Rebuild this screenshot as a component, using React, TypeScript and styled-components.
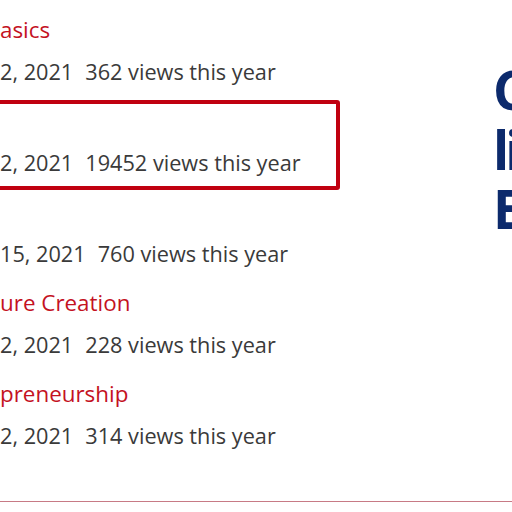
import React from "react";
import styled, { createGlobalStyle } from "styled-components";

const Global = createGlobalStyle`
  html, body { margin: 0; padding: 0; background: #ffffff; }
  body { width: 512px; height: 512px; overflow: hidden; font-family: "Open Sans", "Noto Sans", sans-serif; }
`;

const Page = styled.div`
  width: 512px;
  height: 512px;
  overflow: hidden;
  display: flex;
  flex-direction: column;
`;

const Main = styled.div`
  display: flex;
  align-items: flex-start;
  padding-top: 9px;
`;

const List = styled.ul`
  list-style: none;
  margin: 0 0 0 -24px;
  padding: 0;
  width: 364px;
  flex: none;
  display: flex;
  flex-direction: column;
  gap: 1px;
`;

const Item = styled.li<{ $active?: boolean }>`
  height: 90px;
  box-sizing: border-box;
  border: 4px solid ${(p) => (p.$active ? "#c00010" : "transparent")};
  border-radius: 3px;
  padding-left: 20px;
  white-space: nowrap;
`;

const Title = styled.div`
  height: 34px;
  line-height: 34px;
  font-size: 22.4px;
  color: #c4121f;
`;

const Meta = styled.div`
  height: 48px;
  line-height: 50px;
  font-size: 21.7px;
  color: #3a3a3a;
`;

const Views = styled.span`
  margin-left: 12px;
`;

const Heading = styled.h1`
  margin: 51px 0 0 153px;
  display: flex;
  flex-direction: column;
  font-size: 53px;
  font-weight: 700;
  color: #0c2a6c;
  white-space: nowrap;
  letter-spacing: -4px;
  font-family: "Open Sans", "Noto Sans", sans-serif;
`;

const HeadLine = styled.span`
  display: block;
  height: 59.5px;
  line-height: 59.5px;
`;

const Footer = styled.div`
  margin-top: 38px;
  height: 1px;
  background: #c77a85;
`;

const items = [
  { title: "asics", date: "2, 2021", views: "362 views this year" },
  { title: "", date: "2, 2021", views: "19452 views this year", active: true },
  { title: "", date: "15, 2021", views: "760 views this year" },
  { title: "ure Creation", date: "2, 2021", views: "228 views this year" },
  { title: "preneurship", date: "2, 2021", views: "314 views this year" },
];

export default function App() {
  return (
    <Page>
      <Global />
      <Main>
        <List>
          {items.map((it, i) => (
            <Item key={i} $active={it.active}>
              <Title>{it.title}</Title>
              <Meta>
                {it.date}
                <Views>{it.views}</Views>
              </Meta>
            </Item>
          ))}
        </List>
        <Heading>
          <HeadLine>C</HeadLine>
          <HeadLine>li</HeadLine>
          <HeadLine>E</HeadLine>
        </Heading>
      </Main>
      <Footer />
    </Page>
  );
}
